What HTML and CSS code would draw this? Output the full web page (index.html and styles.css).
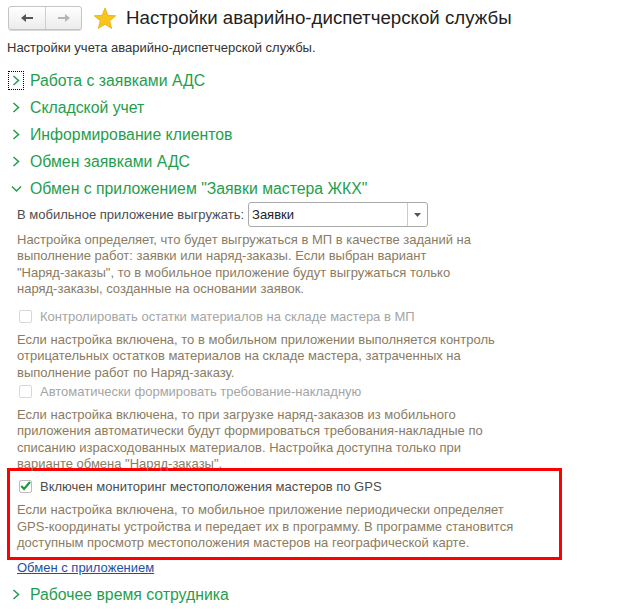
FILE: index.html
```html
<!DOCTYPE html>
<html lang="ru">
<head>
  <meta charset="UTF-8">
  <title>Настройки аварийно-диспетчерской службы</title>
  <link rel="stylesheet" href="styles.css">
</head>
<body>

  <div class="topbar">
    <div class="nav">
      <button class="nav-btn">
        <svg width="14" height="10" viewBox="0 0 14 10"><path d="M1 5 L6 1 L6 4 L13 4 L13 6 L6 6 L6 9 Z" fill="#555"/></svg>
      </button>
      <button class="nav-btn">
        <svg width="14" height="10" viewBox="0 0 14 10"><path d="M13 5 L8 1 L8 4 L1 4 L1 6 L8 6 L8 9 Z" fill="#b5b5b5"/></svg>
      </button>
    </div>
    <svg class="star" width="24" height="23" viewBox="0 0 24 23">
      <path d="M12 1 L14.9 8.3 L22.8 8.8 L16.7 13.8 L18.7 21.5 L12 17.2 L5.3 21.5 L7.3 13.8 L1.2 8.8 L9.1 8.3 Z" fill="#f7c51c" stroke="#e9ac0c" stroke-width="0.8"/>
    </svg>
    <h1>Настройки аварийно-диспетчерской службы</h1>
  </div>

  <p class="subtitle">Настройки учета аварийно-диспетчерской службы.</p>

  <div class="group first"><span class="chev focus"><svg width="8" height="11" viewBox="0 0 8 11"><path d="M1.5 1 L6.5 5.5 L1.5 10" fill="none" stroke="#1f9e4d" stroke-width="1.5"/></svg></span>Работа с заявками АДС</div>
  <div class="group"><span class="chev"><svg width="8" height="11" viewBox="0 0 8 11"><path d="M1.5 1 L6.5 5.5 L1.5 10" fill="none" stroke="#1f9e4d" stroke-width="1.5"/></svg></span>Складской учет</div>
  <div class="group"><span class="chev"><svg width="8" height="11" viewBox="0 0 8 11"><path d="M1.5 1 L6.5 5.5 L1.5 10" fill="none" stroke="#1f9e4d" stroke-width="1.5"/></svg></span>Информирование клиентов</div>
  <div class="group"><span class="chev"><svg width="8" height="11" viewBox="0 0 8 11"><path d="M1.5 1 L6.5 5.5 L1.5 10" fill="none" stroke="#1f9e4d" stroke-width="1.5"/></svg></span>Обмен заявками АДС</div>
  <div class="group"><span class="chev"><svg width="11" height="8" viewBox="0 0 11 8"><path d="M1 1.5 L5.5 6 L10 1.5" fill="none" stroke="#1f9e4d" stroke-width="1.5"/></svg></span>Обмен с приложением "Заявки мастера ЖКХ"</div>

  <div class="group-body">
    <div class="field-row">
      <span class="field-label">В мобильное приложение выгружать:</span>
      <div class="select">
        <span class="select-value">Заявки</span>
        <span class="select-btn"><svg width="7" height="4" viewBox="0 0 7 4"><path d="M0 0 L7 0 L3.5 4 Z" fill="#555"/></svg></span>
      </div>
    </div>
    <p class="note spaced">Настройка определяет, что будет выгружаться в МП в качестве заданий на<br>выполнение работ: заявки или наряд-заказы. Если выбран вариант<br>"Наряд-заказы", то в мобильное приложение будут выгружаться только<br>наряд-заказы, созданные на основании заявок.</p>

    <label class="check disabled"><span class="box"></span>Контролировать остатки материалов на складе мастера в МП</label>
    <p class="note">Если настройка включена, то в мобильном приложении выполняется контроль<br>отрицательных остатков материалов на складе мастера, затраченных на<br>выполнение работ по Наряд-заказу.</p>

    <label class="check disabled"><span class="box"></span>Автоматически формировать требование-накладную</label>
    <p class="note">Если настройка включена, то при загрузке наряд-заказов из мобильного<br>приложения автоматически будут формироваться требования-накладные по<br>списанию израсходованных материалов. Настройка доступна только при<br>варианте обмена "Наряд-заказы".</p>

    <div class="highlight">
      <label class="check"><span class="box"><svg width="13" height="12" viewBox="0 0 13 12"><path d="M1.5 6 L4.8 9.5 L11.8 1.2" fill="none" stroke="#1a9a3a" stroke-width="2.6"/></svg></span>Включен мониторинг местоположения мастеров по GPS</label>
      <p class="note">Если настройка включена, то мобильное приложение периодически определяет<br>GPS-координаты устройства и передает их в программу. В программе становится<br>доступным просмотр местоположения мастеров на географической карте.</p>
    </div>

    <a href="#" class="link">Обмен с приложением</a>
  </div>

  <div class="group last"><span class="chev"><svg width="8" height="11" viewBox="0 0 8 11"><path d="M1.5 1 L6.5 5.5 L1.5 10" fill="none" stroke="#1f9e4d" stroke-width="1.5"/></svg></span>Рабочее время сотрудника</div>

</body>
</html>
```

FILE: styles.css
```css
body {
  font-family: "Liberation Sans", Arial, sans-serif;
  background-color: #fff;
  color: #4d4d4d;
  margin: 0;
  padding: 0;
}

.topbar {
  display: flex;
  align-items: center;
  padding: 6px 8px 0 8px;
  height: 24px;
}

.nav {
  display: flex;
  border: 1px solid #c4c4c4;
  border-radius: 3px;
  background: linear-gradient(#ffffff, #ececec);
  box-shadow: 0 1px 0 #d8d8d8;
}

.nav-btn {
  width: 36px;
  height: 22px;
  border: none;
  background: none;
  padding: 0;
  display: flex;
  align-items: center;
  justify-content: center;
}

.nav-btn + .nav-btn {
  border-left: 1px solid #d0d0d0;
}

.star {
  margin-left: 11px;
}

h1 {
  margin: 0 0 0 9px;
  font-size: 18.7px;
  font-weight: normal;
  color: #222;
}

.subtitle {
  margin: 10px 0 0 7px;
  font-size: 13px;
  line-height: 16px;
  color: #333;
}

.group {
  display: flex;
  align-items: center;
  height: 27px;
  font-size: 15.8px;
  color: #1f9e4d;
}

.group.first {
  margin-top: 11px;
}

.group.last {
  margin-top: 5px;
}

.chev {
  width: 14px;
  height: 17px;
  margin: 0 7px 0 9px;
  display: flex;
  align-items: center;
  justify-content: center;
  box-sizing: border-box;
}

.chev.focus {
  outline: 1px dotted #000;
}

.group-body {
  padding: 0 0 0 17px;
  font-size: 13px;
}

.field-row {
  display: flex;
  align-items: center;
}

.field-label {
  margin-right: 4px;
}

.select {
  display: flex;
  width: 180px;
  height: 25px;
  border: 1px solid #aaa;
  border-radius: 3px;
  box-sizing: border-box;
  color: #222;
}

.select-value {
  flex: 1;
  padding: 4px 3px;
}

.select-btn {
  width: 19px;
  border-left: 1px solid #ccc;
  display: flex;
  align-items: center;
  justify-content: center;
}

.note {
  margin: 5px 0 0 0;
  line-height: 16.3px;
  color: #8a7c62;
}

.note.spaced {
  margin-bottom: 9px;
}

.check + .note {
  margin-top: 6px;
}

.check {
  display: flex;
  align-items: center;
  height: 20px;
  color: #4d4d4d;
}

.check.disabled {
  color: #a5a5a5;
}

.box {
  width: 13px;
  height: 13px;
  box-sizing: border-box;
  margin: 0 8px 0 2px;
  border: 1px solid #bdbdbd;
  border-radius: 2px;
  display: flex;
  align-items: center;
  justify-content: center;
}

.check.disabled .box {
  border-color: #d8d8d8;
}

.highlight {
  margin: -4px 0 0 -10px;
  width: 555px;
  box-sizing: border-box;
  border: 3px solid #ff0000;
  padding: 5px 0 6px 7px;
}

.link {
  display: block;
  width: max-content;
  line-height: 16px;
  color: #1d4fa5;
}
```
